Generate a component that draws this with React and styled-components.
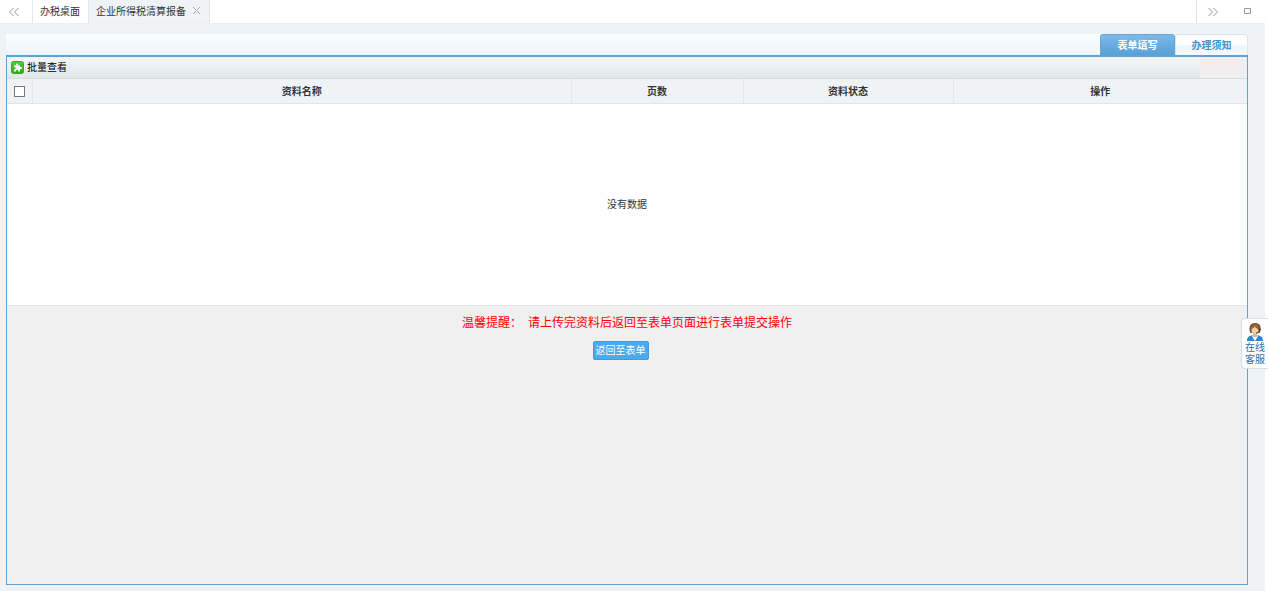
import React, { useState } from "react";
import styled, { createGlobalStyle } from "styled-components";

const GlobalStyle = createGlobalStyle`
  *, *::before, *::after { box-sizing: border-box; }
  body {
    margin: 0;
    background: #fff;
    color: #333;
    font: 10px/16px "Liberation Sans", "Noto Sans CJK SC", sans-serif;
  }
  button { font: inherit; color: inherit; border: 0; padding: 0; background: none; cursor: pointer; }
`;

const Page = styled.div`
  display: flex;
  flex-direction: column;
  min-height: 100vh;
  margin-right: 3px;
  background: #eff3f6;
`;

const TopBar = styled.header`
  display: flex;
  height: 24px;
  background: #fff;
  border-bottom: 1px solid #eceff1;
`;

const BarButton = styled.button`
  && {
    display: flex;
    align-items: center;
    justify-content: center;
    width: ${(p) => p.$width}px;
    padding-right: 4px;
  }
`;

const PageTabs = styled.nav`
  display: flex;
  flex: 1;
  border-left: 1px solid #e4e6e8;
  border-right: 1px solid #dcdfe1;
`;

const PageTab = styled.div`
  display: flex;
  align-items: center;
  gap: 6px;
  padding: 0 8px 0 7px;
  border-right: 1px solid #e4e6e8;
  background: ${(p) => (p.$active ? "#eff3f6" : "#fff")};
`;

const Main = styled.main`
  display: flex;
  flex: 1;
  flex-direction: column;
  padding: 10px 17px 6px 6px;
`;

const FormTabs = styled.div`
  display: flex;
  justify-content: flex-end;
  height: 21px;
  background: linear-gradient(#fdfeff, #edf5fb);
`;

const FormTab = styled.button`
  && {
    width: ${(p) => (p.$active ? 75 : 73)}px;
    padding-top: 2px;
    font-weight: bold;
    border: 1px solid ${(p) => (p.$active ? "#65a9dc" : "#d8e4ee")};
    border-bottom: 0;
    border-radius: 3px 3px 0 0;
    color: ${(p) => (p.$active ? "#fff" : "#4391cb")};
    background: ${(p) =>
      p.$active
        ? "linear-gradient(#7bbaea, #5a9fd6)"
        : "linear-gradient(#fff 0 45%, #eef5fb 55%, #f5fafd)"};
  }
`;

const Panel = styled.section`
  display: flex;
  flex: 1;
  flex-direction: column;
  border: 1px solid #5ea2d6;
  border-top-width: 2px;
  background: #f0f0f0;
`;

const Toolbar = styled.div`
  display: flex;
  justify-content: space-between;
  height: 22px;
  border-bottom: 1px solid #d3dfe1;
  background: linear-gradient(#f3f6f7, #e1e8ea);
`;

const ToolButton = styled.button`
  && {
    display: flex;
    align-items: center;
    gap: 3px;
    padding: 0 4px;
    color: #000;
  }
`;

const ToolbarEnd = styled.div`
  width: 47px;
  background: #f0eeee;
`;

const DataTable = styled.table`
  width: 100%;
  table-layout: fixed;
  border-collapse: separate;
  border-spacing: 0;
  border-bottom: 1px solid #e2e5e7;
  background: #fff;
`;

const Column = styled.col`
  width: ${(p) => p.$width};
`;

const HeadCell = styled.th`
  height: 25px;
  padding: 1px 1px 0 0;
  border-right: 1px solid #e3e7ea;
  border-bottom: 1px solid #e0e4e7;
  background: #eff3f6;
  vertical-align: middle;
  &:last-child { border-right: 0; }
`;

const CheckBox = styled.input`
  appearance: none;
  display: block;
  width: 11px;
  height: 11px;
  margin: 0 auto;
  border: 1px solid #777;
  background: #fff;
  &:checked { background: #4ba7e9; }
`;

const EmptyCell = styled.td`
  height: 201px;
  padding: 0;
  text-align: center;
`;

const Footer = styled.div`
  display: flex;
  flex-direction: column;
  align-items: center;
  gap: 8px;
  padding-top: 7px;
`;

const Reminder = styled.p`
  display: flex;
  gap: 6px;
  margin: 0;
  color: #f00;
  font-size: 12px;
  line-height: 20px;
`;

const ReturnRow = styled.div`
  padding-right: 13px;
`;

const ReturnButton = styled.button`
  && {
    display: block;
    height: 19px;
    padding: 0 2px;
    border: 1px solid #3d9be0;
    border-radius: 2px;
    color: #fff;
    background: #4ba9ec;
  }
`;

const ServiceLink = styled.a`
  position: fixed;
  top: 318px;
  right: 0;
  display: flex;
  flex-direction: column;
  align-items: center;
  width: 27px;
  height: 51px;
  padding: 3px 3px 0;
  border: 1px solid #d5dfe8;
  border-right: 0;
  border-radius: 4px 0 0 4px;
  background: #fff;
  color: #2470b5;
  line-height: 12px;
  text-decoration: none;
`;

const Chevrons = ({ right }) => (
  <svg width="12" height="10" viewBox="0 0 12 10" fill="none" stroke="#999" aria-hidden="true">
    <path d={right ? "M1.5 1l4 4-4 4M6.5 1l4 4-4 4" : "M5.5 1l-4 4 4 4M10.5 1l-4 4 4 4"} />
  </svg>
);

const CloseIcon = () => (
  <svg width="9" height="9" viewBox="0 0 9 9" fill="none" stroke="#aaa" aria-hidden="true">
    <path d="M1 1l7 7M8 1L1 8" />
  </svg>
);

const SquareIcon = () => (
  <svg width="7" height="7" viewBox="0 0 7 7" fill="none" stroke="#999" aria-hidden="true">
    <path d="M.5 .5h6v5h-6z" />
  </svg>
);

const PuzzleIcon = () => (
  <svg width="13" height="13" viewBox="0 0 13 13" aria-hidden="true">
    <defs>
      <linearGradient id="leaf" x2="0" y2="1">
        <stop stopColor="#5cc83e" />
        <stop offset="1" stopColor="#35a81c" />
      </linearGradient>
    </defs>
    <rect x=".5" y=".5" width="12" height="12" rx="2" fill="url(#leaf)" stroke="#3aa527" />
    <path
      d="M3 4.5h2.2C4.6 3.2 5.2 2.4 6.1 2.4S7.600 3.200 7 4.500h2v1.700c1.300-.6 2 0 2 .8s-.7 1.500-2 .9v2.500H7.200c.3-1.100-.2-1.600-1-1.600s-1.400.5-1.100 1.600H3V8.200c1.100.3 1.600-.3 1.600-1S4.100 5.900 3 6.200z"
      fill="#fff"
    />
  </svg>
);

const AgentIcon = () => (
  <svg width="18" height="20" viewBox="0 0 18 20" aria-hidden="true">
    <path d="M4.500 11C2.500 7 3 1 9.200 1S15.500 7 13.500 11z" fill="#7a4e2c" />
    <path d="M7 10h4v5l-2 2-2-2z" fill="#e9b184" />
    <ellipse cx="9" cy="7.500" rx="3.600" ry="4.500" fill="#f6cda5" />
    <path d="M5 7c0-3 2-5 4.500-5S13.500 4 13 7c-2-.3-3.500-1.300-4.300-2.600C7.800 5.800 6.500 6.700 5 7z" fill="#94633a" />
    <path d="M1 19c0-3.500 1.500-5 5.500-5.700L9 17l2.500-3.700C15.500 14 17 15.500 17 19z" fill="#2d86ce" />
    <path d="M5.500 13.500L9 19l3.500-5.500L9 15.500z" fill="#fff" />
    <path d="M13.500 6v3c0 1.500-1.500 2-3.500 2" fill="none" stroke="#333" />
    <circle cx="13.500" cy="7.300" r="1.200" fill="#444" />
  </svg>
);

const columns = [
  { name: "资料名称", width: "43.5%" },
  { name: "页数", width: "13.8%" },
  { name: "资料状态", width: "17%" },
  { name: "操作", width: "auto" },
];

export default function App() {
  const [tab, setTab] = useState("表单填写");
  return (
    <Page>
      <GlobalStyle />
      <TopBar>
        <BarButton $width={32} aria-label="向左"><Chevrons /></BarButton>
        <PageTabs>
          <PageTab><button>办税桌面</button></PageTab>
          <PageTab $active>
            <button>企业所得税清算报备</button>
            <button aria-label="关闭"><CloseIcon /></button>
          </PageTab>
        </PageTabs>
        <BarButton $width={36} aria-label="向右"><Chevrons right /></BarButton>
        <BarButton $width={32} aria-label="最大化"><SquareIcon /></BarButton>
      </TopBar>
      <Main>
        <FormTabs role="tablist">
          {["表单填写", "办理须知"].map((name) => (
            <FormTab
              key={name}
              role="tab"
              aria-selected={tab === name}
              $active={tab === name}
              onClick={() => setTab(name)}
            >
              {name}
            </FormTab>
          ))}
        </FormTabs>
        <Panel>
          <Toolbar>
            <ToolButton><PuzzleIcon />批量查看</ToolButton>
            <ToolbarEnd />
          </Toolbar>
          <DataTable>
            <colgroup>
              <Column $width="26px" />
              {columns.map((c) => <Column key={c.name} $width={c.width} />)}
            </colgroup>
            <thead>
              <tr>
                <HeadCell><CheckBox type="checkbox" aria-label="全选" /></HeadCell>
                {columns.map((c) => <HeadCell key={c.name} scope="col">{c.name}</HeadCell>)}
              </tr>
            </thead>
            <tbody>
              <tr><EmptyCell colSpan={5}>没有数据</EmptyCell></tr>
            </tbody>
          </DataTable>
          <Footer>
            <Reminder>
              <span>温馨提醒：</span>
              <span>请上传完资料后返回至表单页面进行表单提交操作</span>
            </Reminder>
            <ReturnRow><ReturnButton>返回至表单</ReturnButton></ReturnRow>
          </Footer>
        </Panel>
      </Main>
      <ServiceLink href="#service">
        <AgentIcon />
        <span>在线</span>
        <span>客服</span>
      </ServiceLink>
    </Page>
  );
}
